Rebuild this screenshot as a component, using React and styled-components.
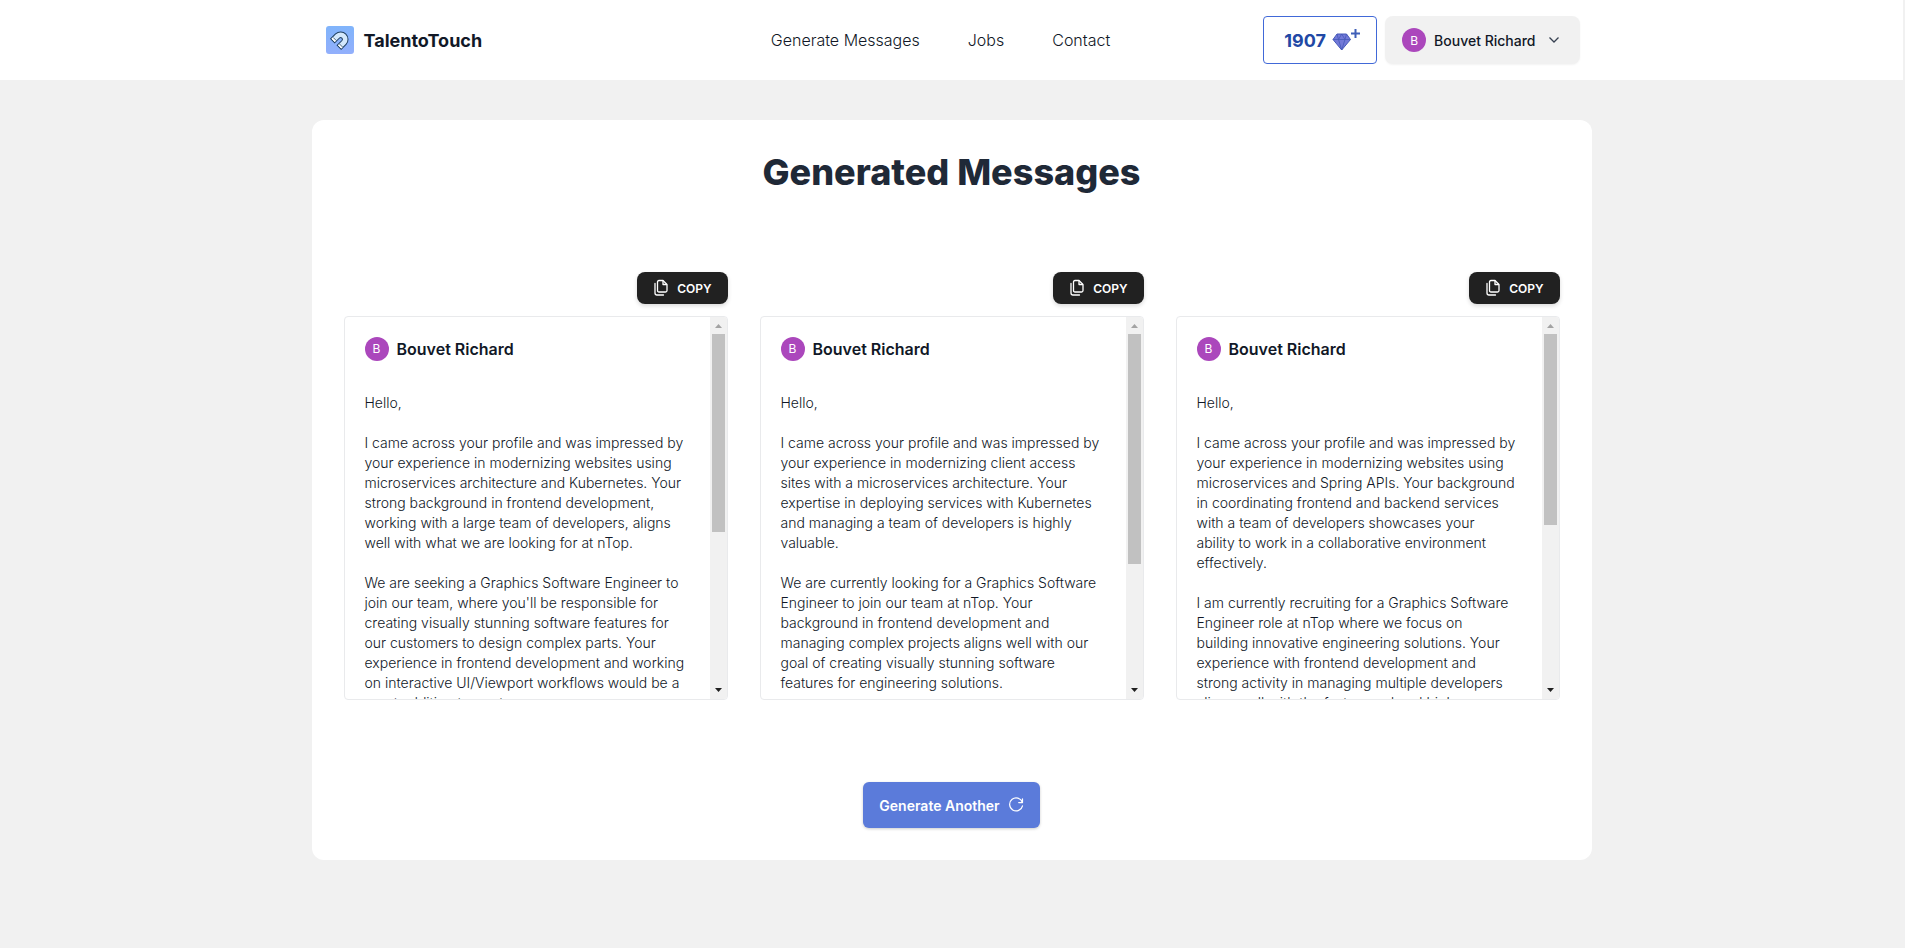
import React from 'react';
import styled, { createGlobalStyle } from 'styled-components';

const messages = [
    {
        id: 1,
        thumb: 57,
        paragraphs: [
            'Hello,',
            'I came across your profile and was impressed by your experience in modernizing websites using microservices architecture and Kubernetes. Your strong background in frontend development, working with a large team of developers, aligns well with what we are looking for at nTop.',
            "We are seeking a Graphics Software Engineer to join our team, where you'll be responsible for creating visually stunning software features for our customers to design complex parts. Your experience in frontend development and working on interactive UI/Viewport workflows would be a great addition to our team.",
        ],
    },
    {
        id: 2,
        thumb: 66,
        paragraphs: [
            'Hello,',
            'I came across your profile and was impressed by your experience in modernizing client access sites with a microservices architecture. Your expertise in deploying services with Kubernetes and managing a team of developers is highly valuable.',
            'We are currently looking for a Graphics Software Engineer to join our team at nTop. Your background in frontend development and managing complex projects aligns well with our goal of creating visually stunning software features for engineering solutions.',
        ],
    },
    {
        id: 3,
        thumb: 55,
        paragraphs: [
            'Hello,',
            'I came across your profile and was impressed by your experience in modernizing websites using microservices and Spring APIs. Your background in coordinating frontend and backend services with a team of developers showcases your\nability to work in a collaborative environment\neffectively.',
            'I am currently recruiting for a Graphics Software Engineer role at nTop where we focus on\nbuilding innovative engineering solutions. Your\nexperience with frontend development and\nstrong activity in managing multiple developers\naligns well with the fast-paced and high-energy team.',
        ],
    },
];

function Magnet() {
    return (
        <Logo viewBox="0 0 28 28" aria-hidden="true">
            <defs>
                <linearGradient id="logoBg" x1="0" y1="0" x2="0" y2="1">
                    <stop offset="0" stopColor="#80b4fb" />
                    <stop offset="1" stopColor="#92affc" />
                </linearGradient>
            </defs>
            <rect width="28" height="28" rx="3" fill="url(#logoBg)" />
            <g fill="none">
                <path d="M6.300 15.200L11.500 10A4.600 4.600 0 0 1 18 16.500L12.800 21.700" stroke="#1f4060" strokeWidth="6.600" />
                <path d="M7.100 14.400L11.500 10A4.600 4.600 0 0 1 18 16.500L13.600 20.900" stroke="#d3e8fb" strokeWidth="4.600" />
                <path d="M7.100 14.400L8.600 12.900M13.600 20.900L15.100 19.400" stroke="#fff" strokeWidth="4.600" />
                <path d="M7.200 11.500L10.200 14.500M13.500 18L16.500 21" stroke="#1f4060" strokeWidth="0.800" />
            </g>
        </Logo>
    );
}

function Gem() {
    return (
        <svg width="28" height="26" viewBox="0 0 28 26" aria-hidden="true">
            <path d="M5 7H14.500L18.500 12.500L9.700 23L1 12.500Z" fill="#7279d8" stroke="#4559b8" strokeWidth="1" strokeLinejoin="round" />
            <path d="M1 12.500H18.500M5 7L6.500 12.500L9.700 23L13 12.500L14.500 7M6.500 12.500L9.700 7L13 12.500" fill="none" stroke="#4559b8" strokeWidth="0.800" />
            <path d="M23.500 2V11M19 6.500H28" stroke="#3f5fb8" strokeWidth="2" />
        </svg>
    );
}

function CopyIcon() {
    return (
        <svg width="16" height="18" viewBox="0 0 16 18" fill="none" stroke="#fff" strokeWidth="1.300" strokeLinejoin="round" aria-hidden="true">
            <path d="M6 1.500H10L14 5.500V11.500Q14 13 12.500 13H6Q4.500 13 4.500 11.500V3Q4.500 1.500 6 1.500Z" />
            <path d="M10 1.500V5.500H14" />
            <path d="M2 4.500V14Q2 16 4 16H10.500" strokeLinecap="round" />
        </svg>
    );
}

function Message({ message }) {
    return (
        <Column>
            <CopyButton type="button"><CopyIcon />COPY</CopyButton>
            <Box>
                <Content>
                    <Author><Avatar>B</Avatar>Bouvet Richard</Author>
                    {message.paragraphs.map((text) => (
                        <p key={text}>{text}</p>
                    ))}
                </Content>
                <Rail aria-hidden="true">
                    <Arrow viewBox="0 0 17 17"><path d="M5 11L8.500 7L12 11Z" fill="#a3a3a3" /></Arrow>
                    <Track><Thumb style={{ height: `${message.thumb}%` }} /></Track>
                    <Arrow viewBox="0 0 17 17"><path d="M5 6L8.500 10L12 6Z" fill="#202020" /></Arrow>
                </Rail>
            </Box>
        </Column>
    );
}

function App() {
    return (
        <Page>
            <GlobalStyle />
            <Header>
                <Bar>
                    <Brand href="#"><Magnet />TalentoTouch</Brand>
                    <Nav>
                        <a href="#generate">Generate Messages</a>
                        <a href="#jobs">Jobs</a>
                        <a href="#contact">Contact</a>
                    </Nav>
                    <Actions>
                        <Credits type="button">1907<Gem /></Credits>
                        <Account type="button">
                            <Avatar>B</Avatar>
                            Bouvet Richard
                            <svg width="12" height="12" viewBox="0 0 12 12" fill="none" stroke="#374151" strokeWidth="1.300" aria-hidden="true">
                                <path d="M1.500 3.500L6 8L10.500 3.500" />
                            </svg>
                        </Account>
                    </Actions>
                </Bar>
            </Header>
            <Card>
                <h1>Generated Messages</h1>
                <Columns>
                    {messages.map((message) => (
                        <Message key={message.id} message={message} />
                    ))}
                </Columns>
                <Generate type="button">
                    Generate Another
                    <svg width="16" height="16" viewBox="0 0 16 16" fill="none" stroke="#fff" strokeWidth="1.200" strokeLinecap="round" strokeLinejoin="round" aria-hidden="true">
                        <path d="M14.500 1.800V5.600H10.700M14.300 5.300A6.500 6.500 0 1 0 14.500 8.800" />
                    </svg>
                </Generate>
            </Card>
        </Page>
    );
}

const GlobalStyle = createGlobalStyle`
* {
    box-sizing: border-box;
}
body {
    margin: 0;
    background: #f1f1f1;
    color: #111827;
    font-family: Inter, sans-serif;
}
h1, p {
    margin: 0;
}
button {
    font-family: inherit;
    cursor: pointer;
}
a {
    color: inherit;
    text-decoration: none;
}
svg {
    flex-shrink: 0;
}
`

const Page = styled.div`
    padding-right: 2px;
`

const Header = styled.header`
    background: #fff;
`

const Bar = styled.div`
    display: grid;
    grid-template-columns: 1fr auto 1fr;
    align-items: center;
    max-width: 1280px;
    height: 80px;
    margin: 0 auto;
    padding: 0 12px 0 14px;
`

const Brand = styled.a`
    display: flex;
    align-items: center;
    gap: 10px;
    font-size: 18px;
    font-weight: 700;
`

const Logo = styled.svg`
    width: 28px;
    height: 28px;
`

const Nav = styled.nav`
    display: flex;
    gap: 48px;
    padding-right: 24px;
    font-size: 16px;
    font-weight: 300;
`

const Actions = styled.div`
    display: flex;
    justify-content: flex-end;
    gap: 8px;
`

const Credits = styled.button`
    display: flex;
    align-items: center;
    gap: 6px;
    height: 48px;
    padding: 0 16px 0 20px;
    border: 1px solid #4169d8;
    border-radius: 4px;
    background: #fff;
    color: #2148a5;
    font-size: 18px;
    font-weight: 700;
`

const Account = styled.button`
    display: flex;
    align-items: center;
    gap: 8px;
    height: 48px;
    padding: 0 20px 0 17px;
    border: 0;
    border-radius: 8px;
    background: #f1f1f1;
    box-shadow: 0 1px 2px rgba(0, 0, 0, 0.05);
    color: #111827;
    font-size: 14px;
    font-weight: 500;

    svg {
        margin-left: 4px;
    }
`

const Avatar = styled.span`
    display: flex;
    align-items: center;
    justify-content: center;
    flex-shrink: 0;
    width: 24px;
    height: 24px;
    border-radius: 50%;
    background: #ab47bc;
    color: #fff;
    font-size: 12px;
    font-weight: 400;
`

const Card = styled.main`
    display: flex;
    flex-direction: column;
    align-items: center;
    max-width: 1280px;
    margin: 40px auto;
    padding: 32px;
    border-radius: 12px;
    background: #fff;

    h1 {
        color: #1f2937;
        font-size: 36px;
        font-weight: 800;
        line-height: 40px;
    }
`

const Columns = styled.div`
    display: grid;
    grid-template-columns: repeat(3, minmax(0, 1fr));
    gap: 32px;
    width: 100%;
    margin: 80px 0 82px;

    @media screen and (max-width: 992px) {
        grid-template-columns: 1fr;
    }
`

const Column = styled.section`
    display: flex;
    flex-direction: column;
    align-items: flex-end;
    gap: 12px;
`

const CopyButton = styled.button`
    display: flex;
    align-items: center;
    gap: 8px;
    height: 32px;
    padding: 0 16px;
    border: 0;
    border-radius: 8px;
    background: #212121;
    box-shadow: 0 2px 4px rgba(0, 0, 0, 0.15);
    color: #fff;
    font-size: 12px;
    font-weight: 600;
`

const Box = styled.article`
    display: flex;
    width: 100%;
    height: 384px;
    border: 1px solid #e9eaec;
    border-radius: 4px;
    overflow: hidden;
`

const Content = styled.div`
    flex: 1;
    padding: 20px;
    overflow-y: auto;
    scrollbar-width: none;

    p {
        color: #111827;
        font-size: 14px;
        font-weight: 300;
        line-height: 20px;
        white-space: pre-line;
    }
    p + p {
        margin-top: 20px;
    }
`

const Author = styled.div`
    display: flex;
    align-items: center;
    gap: 8px;
    margin-bottom: 32px;
    font-size: 16px;
    font-weight: 600;
    line-height: 24px;
`

const Rail = styled.div`
    display: flex;
    flex-direction: column;
    width: 17px;
    background: #f1f1f1;
`

const Arrow = styled.svg`
    width: 17px;
    height: 17px;
`

const Track = styled.div`
    flex: 1;
    padding: 0 2px;
`

const Thumb = styled.div`
    background: #c1c1c1;
`

const Generate = styled.button`
    display: flex;
    align-items: center;
    gap: 8px;
    height: 46px;
    padding: 0 16px;
    border: 0;
    border-radius: 6px;
    background: #5b7bda;
    box-shadow: 0 1px 3px rgba(0, 0, 0, 0.2);
    color: #fff;
    font-size: 14px;
    font-weight: 600;
`

export default App;
